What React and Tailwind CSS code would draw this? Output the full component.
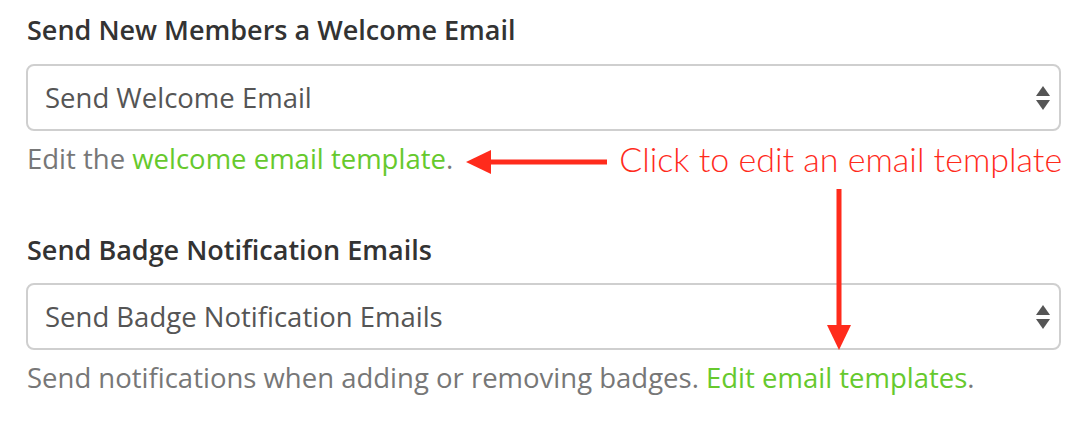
import React from 'react';

const SelectBox = ({ value }) => (
    <div className="relative h-[67px] rounded-[8px] border-2 border-[#cfcfcf] bg-white flex items-center pl-[17px] pr-[40px]">
        <span className="text-[27.5px] text-[#555] leading-[36px]">{value}</span>
        <svg className="absolute right-[8px] top-1/2 -translate-y-1/2" width="16" height="28" viewBox="0 0 16 28">
            <path d="M8 2 L15 12 L1 12 Z" fill="#555" />
            <path d="M1 16 L15 16 L8 26 Z" fill="#555" />
        </svg>
    </div>
);

const Green = ({ children }) => <span className="text-[#66c92d]">{children}</span>;

export default function App() {
    return (
        <div className="relative w-[1092px] h-[428px] bg-white pl-[26px] pr-[31px] pt-[14px] font-['Open_Sans',sans-serif]">
            <h2 className="text-[27px] font-semibold text-[#333] leading-[32px] pl-[1px]">Send New Members a Welcome Email</h2>
            <div className="mt-[18px]">
                <SelectBox value="Send Welcome Email" />
            </div>
            <div className="mt-[10px] flex items-center h-[36px] whitespace-nowrap">
                <p className="shrink-0 text-[27.5px] text-[#777] leading-[36px] pl-[1px]">
                    Edit the <Green>welcome email template</Green>.
                </p>
                <svg className="shrink-0 ml-[13px] mt-[6px]" width="142" height="24" viewBox="0 0 142 24">
                    <path d="M0 12 L25 0 L25 24 Z" fill="#ff2b1c" />
                    <rect x="24" y="9.5" width="117" height="5" fill="#ff2b1c" />
                </svg>
                <span className="shrink-0 ml-[11px] text-[34px] font-light text-[#ff2b1c] leading-none font-['Lato',sans-serif]">Click to edit an email template</span>
            </div>
            <h2 className="mt-[57px] text-[27px] font-semibold text-[#333] leading-[32px] pl-[1px]">Send Badge Notification Emails</h2>
            <div className="mt-[17px]">
                <SelectBox value="Send Badge Notification Emails" />
            </div>
            <p className="mt-[10px] text-[27.5px] text-[#777] pl-[1px] leading-[36px] whitespace-nowrap">
                Send notifications when adding or removing badges. <Green>Edit email templates</Green>.
            </p>
            <svg className="absolute left-[826px] top-[189px]" width="26" height="161" viewBox="0 0 26 161">
                <rect x="10.5" y="0" width="5" height="138" fill="#ff2b1c" />
                <path d="M1 136 L25 136 L13 161 Z" fill="#ff2b1c" />
            </svg>
        </div>
    );
}
